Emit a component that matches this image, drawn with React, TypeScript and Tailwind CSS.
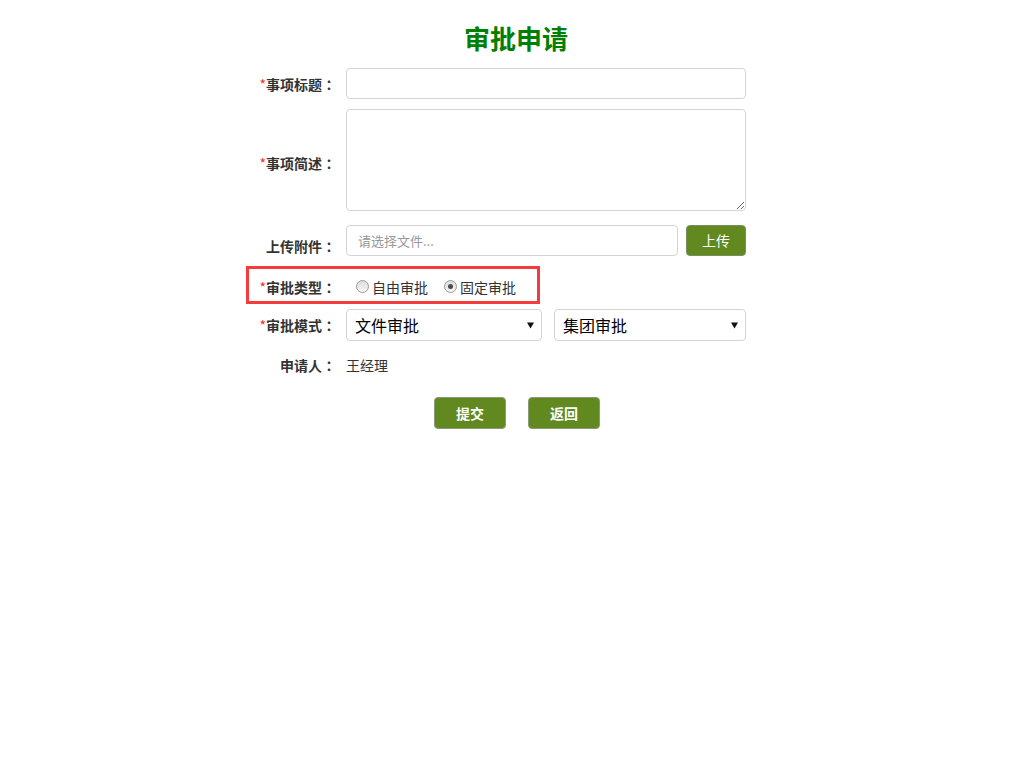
import { useState } from "react";

const FONT = { fontFamily: '"Microsoft YaHei", "Noto Sans CJK SC", "Noto Sans", sans-serif' };

function Label({ text, required, className = "" }: { text: string; required?: boolean; className?: string }) {
  return (
    <label className={`shrink-0 text-right text-[14px] leading-[20px] font-bold text-[#333] ${className}`}>
      {required && <span className="text-[#ff2a2a] font-normal">*</span>}
      {text}
      <span style={{ fontFamily: '"Noto Sans CJK TC", sans-serif' }}>：</span>
    </label>
  );
}

function Radio({ checked, label, onClick }: { checked: boolean; label: string; onClick: () => void }) {
  return (
    <span className="flex items-center cursor-pointer" onClick={onClick}>
      <span className="w-[13px] h-[13px] rounded-full border border-[#9a9a9a] bg-gradient-to-b from-[#dcdcdc] to-[#f6f6f6] flex items-center justify-center">
        {checked && <span className="w-[5px] h-[5px] rounded-full bg-[#4a4a4a]" />}
      </span>
      <span className="ml-[3px] text-[14px] leading-[20px] text-[#333]">{label}</span>
    </span>
  );
}

function Select({ options, className }: { options: string[]; className: string }) {
  return (
    <div className={`relative ${className}`}>
      <select
        className="appearance-none w-full h-[32px] border border-[#d4d4d4] rounded-[4px] bg-white pl-[8px] pr-[24px] text-[16px] text-black outline-none"
        style={FONT}
      >
        {options.map((o) => (
          <option key={o}>{o}</option>
        ))}
      </select>
      <svg className="pointer-events-none absolute right-[8px] top-[13px]" width="7" height="7" viewBox="0 0 7 7">
        <path d="M0 0.5 L7 0.5 L3.5 6.5 Z" fill="#111" />
      </svg>
    </div>
  );
}

export default function App() {
  const [type, setType] = useState("fixed");

  return (
    <div className="min-h-[768px] bg-white pl-2" style={FONT}>
      <div className="w-[560px] mx-auto pt-[20px]">
        <h1 className="text-center text-[26px] leading-[36px] font-bold text-[#008000]">审批申请</h1>

        {/* 事项标题 */}
        <div className="flex items-center mt-[12px]">
          <Label text="事项标题" required className="w-[100px]" />
          <input className="ml-[10px] w-[400px] h-[31px] border border-[#d4d4d4] rounded-[4px] px-2 text-[14px] outline-none" />
        </div>

        {/* 事项简述 */}
        <div className="flex items-center mt-[10px]">
          <Label text="事项简述" required className="w-[100px] pt-[5px]" />
          <textarea className="ml-[10px] w-[400px] h-[102px] border border-[#d4d4d4] rounded-[4px] px-2 py-1 text-[14px] outline-none block" />
        </div>

        {/* 上传附件 */}
        <div className="flex items-start mt-[14px]">
          <Label text="上传附件" className="w-[100px] mt-[11px]" />
          <div className="ml-[10px] w-[400px] flex">
            <input
              readOnly
              placeholder="请选择文件..."
              className="flex-1 h-[31px] border border-[#d4d4d4] rounded-[4px] px-[11px] text-[13px] placeholder:text-[#999] outline-none"
              style={FONT}
            />
            <button className="ml-2 w-[60px] h-[31px] rounded-[4px] bg-[#61891f] border border-[#7a8f5c] text-white text-[14px]">
              上传
            </button>
          </div>
        </div>

        {/* 审批类型 */}
        <div className="mt-[10px] ml-[10px] w-[294px] h-[38px] border-[3px] border-[#f53b3b] flex items-center pt-[3px]">
          <Label text="审批类型" required className="w-[87px]" />
          <div className="ml-[20px] flex items-center gap-[16px]">
            <Radio checked={type === "free"} label="自由审批" onClick={() => setType("free")} />
            <Radio checked={type === "fixed"} label="固定审批" onClick={() => setType("fixed")} />
          </div>
        </div>

        {/* 审批模式 */}
        <div className="flex items-center mt-[5px]">
          <Label text="审批模式" required className="w-[100px]" />
          <div className="ml-[10px] w-[400px] flex gap-[12px]">
            <Select options={["文件审批", "费用审批"]} className="w-[196px]" />
            <Select options={["集团审批", "部门审批"]} className="w-[192px]" />
          </div>
        </div>

        {/* 申请人 */}
        <div className="flex items-center mt-[14px]">
          <Label text="申请人" className="w-[100px]" />
          <span className="ml-[10px] text-[14px] leading-[20px] text-[#333]">王经理</span>
        </div>

        <div className="flex justify-center gap-[22px] mt-[22px] pl-[2px]">
          <button className="w-[72px] h-[32px] rounded-[4px] bg-[#61891f] border border-[#8a9a78] text-white text-[14px] font-bold">
            提交
          </button>
          <button className="w-[72px] h-[32px] rounded-[4px] bg-[#61891f] border border-[#8a9a78] text-white text-[14px] font-bold">
            返回
          </button>
        </div>
      </div>
    </div>
  );
}
